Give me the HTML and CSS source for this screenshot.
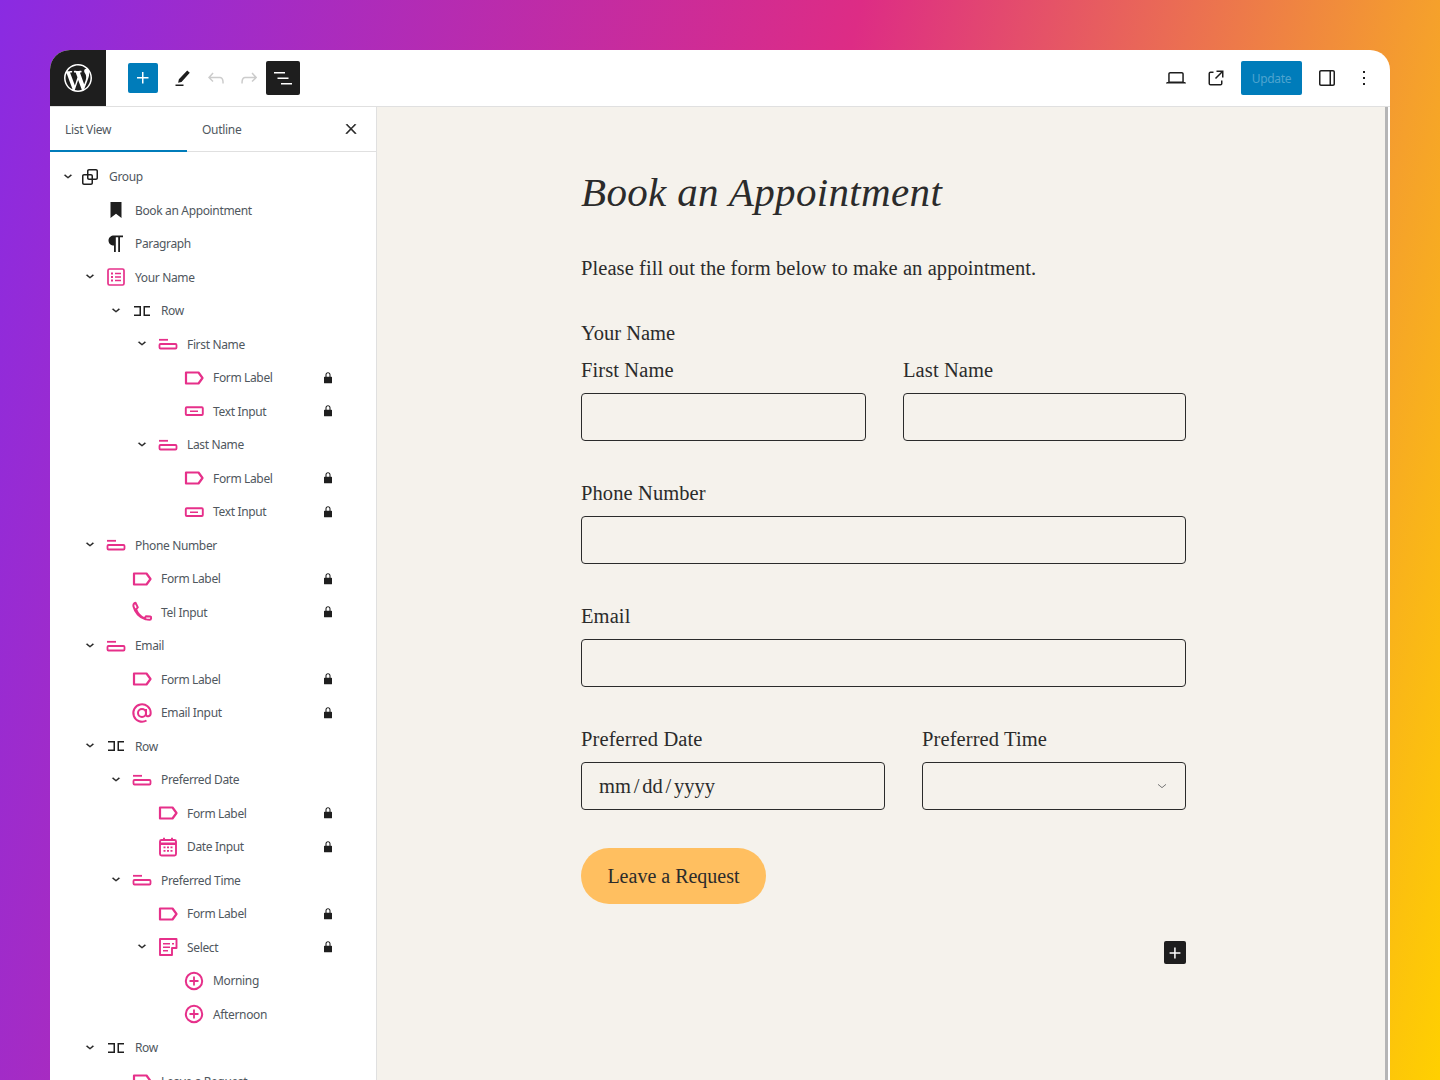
FILE: index.html
```html
<!DOCTYPE html>
<html lang="en">
<head>
    <meta charset="UTF-8">
    <title>Book an Appointment</title>
    <link rel="stylesheet" href="styles.css">
</head>
<body>
    <svg class="sprite" xmlns="http://www.w3.org/2000/svg">
        <symbol id="chev" viewBox="0 0 24 24"><path d="M17.5 9.6 12 14l-5.5-4.4.9-1.2L12 12l4.5-3.6 1 1.2z" stroke="currentColor" stroke-width=".6"/></symbol>
        <symbol id="group" viewBox="0 0 24 24"><path d="M18 4h-7c-1.1 0-2 .9-2 2v3H6c-1.1 0-2 .9-2 2v7c0 1.1.9 2 2 2h7c1.1 0 2-.9 2-2v-3h3c1.1 0 2-.9 2-2V6c0-1.1-.9-2-2-2zm-4.500 14c0 .3-.2.5-.5.5H6c-.3 0-.5-.2-.5-.5v-7c0-.3.2-.5.5-.5h3V13c0 1.100.9 2 2 2h2.500v3zm0-4.500H11c-.3 0-.5-.2-.5-.5v-2.500H13c.3 0 .5.2.5.5v2.500zm5-.5c0 .3-.2.5-.5.5h-3V11c0-1.100-.9-2-2-2h-2.500V6c0-.3.2-.5.5-.5h7c.3 0 .5.2.5.5v7z"/></symbol>
        <symbol id="bookmark" viewBox="0 0 24 24"><path d="M6.500 4h11v16l-5.500-4.200L6.500 20z"/></symbol>
        <symbol id="para" viewBox="0 0 24 24"><path d="M10 3.500C7 3.500 4.500 5.500 4.500 8.500s2.500 5 5.500 5v6.500h1.800V5.300h2.400V20H16V5.300h3V3.500z"/></symbol>
        <symbol id="row" viewBox="0 0 24 24"><path d="M4 7h7v10H4v-1.500h5.500v-7H4zM20 7h-6.500v10H20v-1.500h-5v-7h5z"/></symbol>
        <symbol id="form" viewBox="0 0 24 24"><g fill="none" stroke="currentColor" stroke-width="1.700"><rect x="4" y="4" width="16" height="16" rx="1.500"/><path d="M11 8.500h6M11 12h6M11 15.500h6"/></g><path d="M7 7.500h2v2H7zM7 11h2v2H7zM7 14.500h2v2H7z"/></symbol>
        <symbol id="field" viewBox="0 0 24 24"><g fill="none" stroke="currentColor" stroke-width="1.800"><path d="M3 7.800h9"/><rect x="3.500" y="12" width="17" height="4.500" rx="1"/></g></symbol>
        <symbol id="label" viewBox="0 0 24 24"><path d="M4 6.500h12.500l4 5.500-4 5.500H4z" fill="none" stroke="currentColor" stroke-width="2.200" stroke-linejoin="round"/></symbol>
        <symbol id="text" viewBox="0 0 24 24"><rect x="3.800" y="8.300" width="17" height="7.700" rx="1" fill="none" stroke="currentColor" stroke-width="1.900"/><path d="M8 11.500h8v1.500H8z"/></symbol>
        <symbol id="tel" viewBox="0 0 24 24"><path d="M5.500 2.800l2.300 4.600-1.800 1.800c1.500 4 4.500 7.500 8.500 9.300l1.400-2.300 4.400.4c1.300.2 1 3.200-.5 3.200-1.500 0-2.900 0-4.300-.6C9.500 18 5 12.500 3.500 6.500c-.5-2 .5-3.700 2-3.700z" fill="none" stroke="currentColor" stroke-width="2" stroke-linejoin="round"/></symbol>
        <symbol id="at" viewBox="0 0 24 24"><g fill="none" stroke="currentColor" stroke-width="2"><circle cx="12" cy="12" r="4"/><path d="M16 8v5.500c0 2.500 4.700 2.500 4.700-1.500A8.700 8.700 0 1 0 16.500 19.500"/></g></symbol>
        <symbol id="date" viewBox="0 0 24 24"><g fill="none" stroke="currentColor" stroke-width="1.900"><rect x="4" y="5" width="16" height="15.500" rx="1.500"/><path d="M8 2.800v3M16 2.800v3"/></g><path d="M4 7.500h16v2.500H4zM7.500 11.500h2v1.800h-2zM11 11.500h2v1.800h-2zM14.500 11.500h2v1.800h-2zM7.500 15h2v1.800h-2zM11 15h2v1.800h-2zM14.500 15h2v1.800h-2z"/></symbol>
        <symbol id="select" viewBox="0 0 24 24"><path d="M4 4h16.500v9H16v7H4z" fill="none" stroke="currentColor" stroke-width="1.900" stroke-linejoin="round"/><path d="M7 8h7v1.500H7zM16 8h2v1.500h-2zM7 11.500h7V13H7zM7 15h5v1.500H7z"/></symbol>
        <symbol id="option" viewBox="0 0 24 24"><circle cx="12" cy="12" r="8.200" fill="none" stroke="currentColor" stroke-width="2"/><path d="M11.100 7.500h1.800v3.600h3.600v1.800h-3.600v3.600h-1.800v-3.600H7.500v-1.800h3.600z"/></symbol>
        <symbol id="lock" viewBox="0 0 24 24"><path d="M17 10h-1.200V7c0-2.100-1.700-3.800-3.800-3.800-2.100 0-3.800 1.700-3.800 3.800v3H7c-.6 0-1 .4-1 1v8c0 .6.4 1 1 1h10c.6 0 1-.4 1-1v-8c0-.6-.4-1-1-1zm-2.800 0H9.800V7c0-1.200 1-2.200 2.200-2.200s2.200 1 2.200 2.200v3z"/></symbol>
    </svg>

    <div class="app">
        <header class="topbar">
            <div class="logo">
                <svg width="28" height="28" viewBox="0 0 20 20"><path fill="#fff" d="M20 10c0-5.510-4.490-10-10-10C4.480 0 0 4.490 0 10c0 5.520 4.480 10 10 10 5.510 0 10-4.480 10-10zM7.780 15.370L4.370 6.220c.55-.02 1.170-.08 1.170-.08.5-.06.44-1.130-.06-1.110 0 0-1.450.11-2.370.11-.18 0-.37 0-.58-.01C4.120 2.690 6.870 1.110 10 1.110c2.330 0 4.450.87 6.050 2.340-.68-.11-1.650.39-1.650 1.580 0 .74.45 1.360.9 2.100.35.61.55 1.360.55 2.460 0 1.490-1.400 5-1.400 5l-3.030-8.370c.54-.02.82-.17.82-.17.5-.05.44-1.250-.06-1.220 0 0-1.440.12-2.380.12-.87 0-2.330-.12-2.330-.12-.5-.03-.56 1.200-.06 1.220l.92.08 1.260 3.410zM17.410 10c.24-.64.74-1.870.43-4.250.7 1.290 1.050 2.710 1.050 4.250 0 3.290-1.730 6.240-4.400 7.780.97-2.590 1.940-5.200 2.920-7.780zM6.100 18.090C3.120 16.650 1.110 13.530 1.110 10c0-1.300.23-2.480.72-3.590C3.250 10.300 4.670 14.200 6.100 18.090zm4.030-6.630l2.580 6.980c-.86.29-1.760.45-2.710.45-.79 0-1.570-.11-2.290-.33.81-2.380 1.620-4.740 2.420-7.100z"/></svg>
            </div>
            <div class="tools">
                <button class="btn-add"><svg width="24" height="24" viewBox="0 0 24 24"><path fill="#fff" d="M11 12.500V17.500H12.500V12.500H17.500V11H12.500V6H11V11H6V12.500H11Z"/></svg></button>
                <button class="btn-icon btn-edit"><svg width="24" height="24" viewBox="0 0 24 24"><path d="M17.200 4.500l2.600 2.200-8.300 9.200-3.400.9.800-3.500zM5.500 18.500h8V20h-8z"/></svg></button>
                <button class="btn-icon btn-undo"><svg width="24" height="24" viewBox="0 0 24 24"><path d="M18.300 11.700c-.6-.6-1.400-.9-2.300-.9H6.700l2.900-3.300-1.100-1-4.500 5L8.500 16l1-1-2.700-2.700H16c.5 0 .9.2 1.300.5 1 1 1 3.400 1 4.500v.3h1.500v-.2c0-1.500 0-4.300-1.500-5.700z"/></svg></button>
                <button class="btn-icon btn-redo"><svg width="24" height="24" viewBox="0 0 24 24"><path d="M15.600 6.500l-1.100 1 2.900 3.300H8c-.9 0-1.700.3-2.300.9-1.400 1.500-1.400 4.200-1.400 5.600v.2h1.500v-.3c0-1.100 0-3.500 1-4.500.3-.3.7-.5 1.300-.5h9.200L14.500 15l1.100 1.100 4.600-4.600-4.600-5z"/></svg></button>
                <button class="btn-list"><svg width="24" height="24" viewBox="0 0 24 24"><path fill="#fff" d="M3 6h11v1.500H3V6zm3.500 5.500h11V13h-11v-1.500zM21 17H10v1.500h11V17z"/></svg></button>
            </div>
            <div class="actions">
                <button class="btn-icon"><svg width="24" height="24" viewBox="0 0 24 24"><path d="M20.500 16h-.7V8c0-1.100-.9-2-2-2H6.200c-1.100 0-2 .9-2 2v8h-.7c-.8 0-1.500.7-1.500 1.500h20c0-.8-.7-1.500-1.500-1.500zM5.700 8c0-.3.2-.5.5-.5h11.600c.3 0 .5.2.5.5v7.600H5.700V8z"/></svg></button>
                <button class="btn-icon"><svg width="24" height="24" viewBox="0 0 24 24"><path d="M19.500 4.500h-7V6h4.440l-5.970 5.970 1.060 1.060L18 7.060v4.440h1.500v-7Zm-13 1a2 2 0 0 0-2 2v10a2 2 0 0 0 2 2h10a2 2 0 0 0 2-2v-3H17v3a.5.5 0 0 1-.5.5h-10a.5.5 0 0 1-.5-.5v-10a.5.5 0 0 1 .5-.5h3V5.500h-3Z"/></svg></button>
                <button class="btn-update">Update</button>
                <button class="btn-icon"><svg width="24" height="24" viewBox="0 0 24 24"><path fill-rule="evenodd" d="M18 4H6c-1.100 0-2 .9-2 2v12c0 1.100.9 2 2 2h12c1.100 0 2-.9 2-2V6c0-1.100-.9-2-2-2zM6 5.500h8.500v13H6c-.3 0-.5-.2-.5-.5V6c0-.3.2-.5.5-.5zM18.500 18c0 .3-.2.5-.5.5h-2v-13h2c.3 0 .5.2.5.5z"/></svg></button>
                <button class="btn-icon"><svg width="24" height="24" viewBox="0 0 24 24"><path d="M13 19h-2v-2h2v2zm0-6h-2v-2h2v2zm0-6h-2V5h2v2z"/></svg></button>
            </div>
        </header>

        <div class="main">
            <aside class="sidebar">
                <div class="tabs">
                    <div class="tab tab-active">List View</div>
                    <div class="tab">Outline</div>
                    <svg class="tab-close" width="16" height="16" viewBox="0 0 24 24"><path d="M13 11.800l6.100-6.300-1-1-6.100 6.200-6.100-6.200-1 1 6.100 6.300-6.500 6.700 1 1 6.500-6.600 6.500 6.600 1-1z" stroke="#1e1e1e" stroke-width="1"/></svg>
                </div>
                <ul class="tree">
                    <li class="node lvl-0"><svg class="chev"><use href="#chev"/></svg><svg class="ico"><use href="#group"/></svg><span>Group</span></li>
                    <li class="node lvl-1"><i class="chev"></i><svg class="ico"><use href="#bookmark"/></svg><span>Book an Appointment</span></li>
                    <li class="node lvl-1"><i class="chev"></i><svg class="ico"><use href="#para"/></svg><span>Paragraph</span></li>
                    <li class="node lvl-1"><svg class="chev"><use href="#chev"/></svg><svg class="ico pink"><use href="#form"/></svg><span>Your Name</span></li>
                    <li class="node lvl-2"><svg class="chev"><use href="#chev"/></svg><svg class="ico"><use href="#row"/></svg><span>Row</span></li>
                    <li class="node lvl-3"><svg class="chev"><use href="#chev"/></svg><svg class="ico pink"><use href="#field"/></svg><span>First Name</span></li>
                    <li class="node lvl-4"><i class="chev"></i><svg class="ico pink"><use href="#label"/></svg><span>Form Label</span><svg class="lock"><use href="#lock"/></svg></li>
                    <li class="node lvl-4"><i class="chev"></i><svg class="ico pink"><use href="#text"/></svg><span>Text Input</span><svg class="lock"><use href="#lock"/></svg></li>
                    <li class="node lvl-3"><svg class="chev"><use href="#chev"/></svg><svg class="ico pink"><use href="#field"/></svg><span>Last Name</span></li>
                    <li class="node lvl-4"><i class="chev"></i><svg class="ico pink"><use href="#label"/></svg><span>Form Label</span><svg class="lock"><use href="#lock"/></svg></li>
                    <li class="node lvl-4"><i class="chev"></i><svg class="ico pink"><use href="#text"/></svg><span>Text Input</span><svg class="lock"><use href="#lock"/></svg></li>
                    <li class="node lvl-1"><svg class="chev"><use href="#chev"/></svg><svg class="ico pink"><use href="#field"/></svg><span>Phone Number</span></li>
                    <li class="node lvl-2"><i class="chev"></i><svg class="ico pink"><use href="#label"/></svg><span>Form Label</span><svg class="lock"><use href="#lock"/></svg></li>
                    <li class="node lvl-2"><i class="chev"></i><svg class="ico pink"><use href="#tel"/></svg><span>Tel Input</span><svg class="lock"><use href="#lock"/></svg></li>
                    <li class="node lvl-1"><svg class="chev"><use href="#chev"/></svg><svg class="ico pink"><use href="#field"/></svg><span>Email</span></li>
                    <li class="node lvl-2"><i class="chev"></i><svg class="ico pink"><use href="#label"/></svg><span>Form Label</span><svg class="lock"><use href="#lock"/></svg></li>
                    <li class="node lvl-2"><i class="chev"></i><svg class="ico pink"><use href="#at"/></svg><span>Email Input</span><svg class="lock"><use href="#lock"/></svg></li>
                    <li class="node lvl-1"><svg class="chev"><use href="#chev"/></svg><svg class="ico"><use href="#row"/></svg><span>Row</span></li>
                    <li class="node lvl-2"><svg class="chev"><use href="#chev"/></svg><svg class="ico pink"><use href="#field"/></svg><span>Preferred Date</span></li>
                    <li class="node lvl-3"><i class="chev"></i><svg class="ico pink"><use href="#label"/></svg><span>Form Label</span><svg class="lock"><use href="#lock"/></svg></li>
                    <li class="node lvl-3"><i class="chev"></i><svg class="ico pink"><use href="#date"/></svg><span>Date Input</span><svg class="lock"><use href="#lock"/></svg></li>
                    <li class="node lvl-2"><svg class="chev"><use href="#chev"/></svg><svg class="ico pink"><use href="#field"/></svg><span>Preferred Time</span></li>
                    <li class="node lvl-3"><i class="chev"></i><svg class="ico pink"><use href="#label"/></svg><span>Form Label</span><svg class="lock"><use href="#lock"/></svg></li>
                    <li class="node lvl-3"><svg class="chev"><use href="#chev"/></svg><svg class="ico pink"><use href="#select"/></svg><span>Select</span><svg class="lock"><use href="#lock"/></svg></li>
                    <li class="node lvl-4"><i class="chev"></i><svg class="ico pink"><use href="#option"/></svg><span>Morning</span></li>
                    <li class="node lvl-4"><i class="chev"></i><svg class="ico pink"><use href="#option"/></svg><span>Afternoon</span></li>
                    <li class="node lvl-1"><svg class="chev"><use href="#chev"/></svg><svg class="ico"><use href="#row"/></svg><span>Row</span></li>
                    <li class="node lvl-2"><i class="chev"></i><svg class="ico pink"><use href="#label"/></svg><span>Leave a Request</span></li>
                </ul>
            </aside>

            <main class="canvas">
                <div class="page">
                    <h1>Book an Appointment</h1>
                    <p class="intro">Please fill out the form below to make an appointment.</p>
                    <div class="group-label">Your Name</div>
                    <div class="cols cols-name">
                        <div class="field"><label>First Name</label><input type="text"></div>
                        <div class="field"><label>Last Name</label><input type="text"></div>
                    </div>
                    <div class="field"><label>Phone Number</label><input type="text"></div>
                    <div class="field"><label>Email</label><input type="text"></div>
                    <div class="cols cols-when">
                        <div class="field">
                            <label>Preferred Date</label>
                            <div class="box box-date">mm / dd / yyyy</div>
                        </div>
                        <div class="field">
                            <label>Preferred Time</label>
                            <div class="box box-select"><svg width="16" height="16" viewBox="0 0 24 24"><path d="M6 9.500l6 5 6-5" fill="none" stroke="#777" stroke-width="1.500"/></svg></div>
                        </div>
                    </div>
                    <button class="btn-request">Leave a Request</button>
                    <div class="appender">
                        <button class="btn-append"><svg width="20" height="20" viewBox="0 0 24 24"><path fill="#fff" d="M11 12.500V18.500H12.800V12.800H18.500V11H12.800V5.500H11V11H5.500V12.800H11Z"/></svg></button>
                    </div>
                </div>
                <div class="scrollbar"></div>
            </main>
        </div>
    </div>
</body>
</html>
```

FILE: styles.css
```css
* {
    box-sizing: border-box;
}
html, body {
    height: 100%;
}
body {
    margin: 0;
    padding: 50px 50px 0;
    overflow: hidden;
    font-family: "Noto Sans", sans-serif;
    background: linear-gradient(103deg, #8a2be2 0%, #dd2c85 51%, #f5a02c 85%, #ffd000 100%);
}
button {
    border: none;
    padding: 0;
    cursor: pointer;
    background: none;
    font-family: inherit;
}
.sprite {
    display: none;
}
.app {
    height: 1030px;
    display: flex;
    flex-direction: column;
    background: #fff;
    border-radius: 20px 20px 0 0;
    overflow: hidden;
}

/* top bar */
.topbar {
    height: 57px;
    flex: none;
    display: flex;
    align-items: center;
    border-bottom: 1px solid #e0e0e0;
}
.logo {
    width: 56px;
    height: 56px;
    background: #1e1e1e;
    display: flex;
    align-items: center;
    justify-content: center;
}
.tools {
    display: flex;
    align-items: center;
    margin-left: 22px;
}
.actions {
    display: flex;
    align-items: center;
    margin-left: auto;
    margin-right: 9px;
}
.btn-add {
    width: 30px;
    height: 30px;
    background: #007cba;
    border-radius: 2px;
    display: flex;
    align-items: center;
    justify-content: center;
}
.btn-icon {
    width: 34px;
    height: 34px;
    display: flex;
    align-items: center;
    justify-content: center;
    fill: #1e1e1e;
}
.btn-edit {
    margin-left: 7px;
}
.btn-undo, .btn-redo {
    fill: #cccccc;
}
.btn-redo {
    margin-left: -1px;
}
.btn-list {
    width: 34px;
    height: 34px;
    background: #1e1e1e;
    border-radius: 2px;
    display: flex;
    align-items: center;
    justify-content: center;
}
.actions .btn-icon + .btn-icon {
    margin-left: 6px;
}
.btn-update {
    width: 61px;
    height: 34px;
    margin: 0 8px;
    background: #007cba;
    color: #4ea4cf;
    font-size: 12px;
    letter-spacing: -.3px;
    border-radius: 2px;
}
.actions .btn-update + .btn-icon + .btn-icon {
    margin-left: 3px;
}

.main {
    flex: 1;
    min-height: 0;
    display: flex;
}

/* list view */
.sidebar {
    width: 327px;
    flex: none;
    border-right: 1px solid #e0e0e0;
    overflow: hidden;
}
.tabs {
    height: 45px;
    display: flex;
    align-items: center;
    border-bottom: 1px solid #e0e0e0;
}
.tab {
    width: 137px;
    height: 45px;
    display: flex;
    align-items: center;
    padding-left: 15px;
    font-size: 12px;
    letter-spacing: -.3px;
    color: #50575e;
}
.tab-active {
    box-shadow: inset 0 -2px 0 #007cba;
}
.tab-close {
    margin-left: auto;
    margin-right: 17px;
    fill: #1e1e1e;
}
.tree {
    list-style: none;
    margin: 0;
    padding: 8px 0 0;
}
.node {
    height: 33.5px;
    display: flex;
    align-items: center;
    font-size: 12px;
    letter-spacing: -.35px;
    color: #50575e;
}
.lvl-0 { padding-left: 10px; }
.lvl-1 { padding-left: 32px; }
.lvl-2 { padding-left: 58px; }
.lvl-3 { padding-left: 84px; }
.lvl-4 { padding-left: 110px; }
.chev {
    width: 16px;
    height: 16px;
    flex: none;
    margin-right: 6px;
    fill: #1e1e1e;
    color: #1e1e1e;
}
.lvl-0 .chev {
    margin-right: 2px;
}
.ico {
    width: 24px;
    height: 24px;
    flex: none;
    margin-right: 7px;
    fill: #1e1e1e;
    color: #1e1e1e;
}
.ico.pink {
    fill: #e6308a;
    color: #e6308a;
}
.lock {
    width: 16px;
    height: 16px;
    margin-left: auto;
    margin-right: 40px;
    fill: #1e1e1e;
}

/* editor canvas */
.canvas {
    flex: 1;
    min-width: 0;
    background: #f5f2ec;
    position: relative;
    overflow: hidden;
}
.scrollbar {
    position: absolute;
    top: 0;
    right: 0;
    bottom: 0;
    width: 5px;
    border-left: 3px solid #b5b5b5;
    background: #fff;
}
.page {
    width: 605px;
    margin: 0 auto;
    font-family: "Liberation Serif", serif;
    color: #2b2b2b;
}
h1 {
    margin: 57px 0 0;
    font-size: 41px;
    line-height: 56px;
    font-style: italic;
    font-weight: 400;
    letter-spacing: .35px;
}
.intro {
    margin: 33px 0 0;
    font-size: 20.5px;
    line-height: 30px;
    letter-spacing: .08px;
}
.group-label {
    margin-top: 35px;
    font-size: 20.5px;
    line-height: 30px;
}
.field label {
    display: block;
    margin-bottom: 8px;
    font-size: 20.5px;
    line-height: 30px;
    letter-spacing: .1px;
}
.field {
    margin-bottom: 37px;
    flex: 1;
    min-width: 0;
}
.field input, .box {
    display: block;
    width: 100%;
    height: 48px;
    background: transparent;
    border: 1px solid #2b2b2b;
    border-radius: 4px;
}
.cols {
    display: flex;
    gap: 37px;
}
.cols-name {
    margin-top: 7px;
}
.cols-name .field:first-child {
    flex: none;
    width: 285px;
}
.cols-when .field:first-child {
    flex: none;
    width: 304px;
}
.box {
    display: flex;
    align-items: center;
    padding: 0 17px;
    font-size: 20.5px;
    word-spacing: -2.3px;
}
.box-select {
    justify-content: flex-end;
    padding-right: 15px;
}
.btn-request {
    display: block;
    width: 185px;
    height: 56px;
    margin-top: 1px;
    background: #ffbf60;
    border-radius: 28px;
    font-family: "Liberation Serif", serif;
    font-size: 20px;
    color: #2b2b2b;
}
.appender {
    display: flex;
    justify-content: flex-end;
    margin-top: 37px;
}
.btn-append {
    width: 22px;
    height: 23px;
    background: #1e1e1e;
    border-radius: 2px;
    display: flex;
    align-items: center;
    justify-content: center;
}
```
